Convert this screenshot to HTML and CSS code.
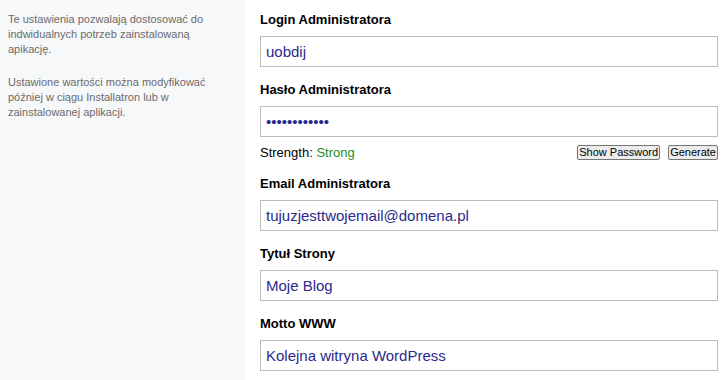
FILE: index.html
```html
<!DOCTYPE html>
<html lang="pl">
<head>
    <meta charset="UTF-8">
    <meta name="viewport" content="width=device-width, initial-scale=1.0">
    <title>Ustawienia aplikacji</title>
    <link rel="stylesheet" href="styles.css">
</head>
<body>

<div class="layout">
    <!-- Sidebar with help text -->
    <aside class="sidebar">
        <p>Te ustawienia pozwalają dostosować do indwidualnych potrzeb zainstalowaną apikację.</p>
        <p>Ustawione wartości można modyfikować później w ciągu Installatron lub w zainstalowanej aplikacji.</p>
    </aside>

    <!-- Settings form -->
    <form class="settings">
        <div class="field">
            <label for="login">Login Administratora</label>
            <input type="text" id="login" value="uobdij">
        </div>

        <div class="field">
            <label for="pass">Hasło Administratora</label>
            <input type="password" id="pass" value="Xk29pQm7aLz4">
            <div class="strength-row">
                <span>Strength: <span class="strong">Strong</span></span>
                <span class="pass-buttons">
                    <button type="button">Show Password</button>
                    <button type="button">Generate</button>
                </span>
            </div>
        </div>

        <div class="field">
            <label for="email">Email Administratora</label>
            <input type="text" id="email" value="tujuzjesttwojemail@domena.pl">
        </div>

        <div class="field">
            <label for="title">Tytuł Strony</label>
            <input type="text" id="title" value="Moje Blog">
        </div>

        <div class="field">
            <label for="motto">Motto WWW</label>
            <input type="text" id="motto" value="Kolejna witryna WordPress">
        </div>
    </form>
</div>

</body>
</html>
```

FILE: styles.css
```css
body {
    margin: 0;
    font-family: "Liberation Sans", Arial, sans-serif;
    background-color: #fff;
}

.layout {
    display: flex;
    min-height: 100vh;
}

/* Sidebar */
.sidebar {
    width: 245px;
    flex-shrink: 0;
    box-sizing: border-box;
    padding: 12px 16px 0 8px;
    background-color: #f7f8fa;
    color: #6b6b6b;
    font-size: 11px;
    line-height: 15px;
}
.sidebar p {
    margin: 0 0 18px 0;
}

/* Form */
.settings {
    flex: 1;
    padding: 12px 10px 0 15px;
}

.field {
    margin-bottom: 15px;
}

.field label {
    display: block;
    font-size: 13px;
    font-weight: bold;
    line-height: 16px;
    color: #000;
    margin-bottom: 8px;
}

.field input {
    display: block;
    box-sizing: border-box;
    width: 100%;
    height: 31px;
    margin: 0;
    padding: 0 5px;
    border: 1px solid #bcbcbc;
    border-radius: 0;
    font-family: "Liberation Sans", Arial, sans-serif;
    font-size: 15px;
    color: #2a2a8c;
    background: #fff;
    outline: none;
}

.strength-row {
    display: flex;
    justify-content: space-between;
    align-items: center;
    margin: 7px 0 1px 0;
    height: 17px;
    font-size: 13px;
    color: #000;
}
.strong {
    color: #1e8c1e;
}

.pass-buttons {
    display: flex;
    gap: 8px;
}
.pass-buttons button {
    margin: 0;
    padding: 0 1px;
    height: 15px;
    font-family: "Liberation Sans", Arial, sans-serif;
    font-size: 11px;
    line-height: 13px;
    color: #000;
    background-color: #ececec;
    border: 1px solid #767676;
    border-radius: 2px;
    cursor: pointer;
}
```
